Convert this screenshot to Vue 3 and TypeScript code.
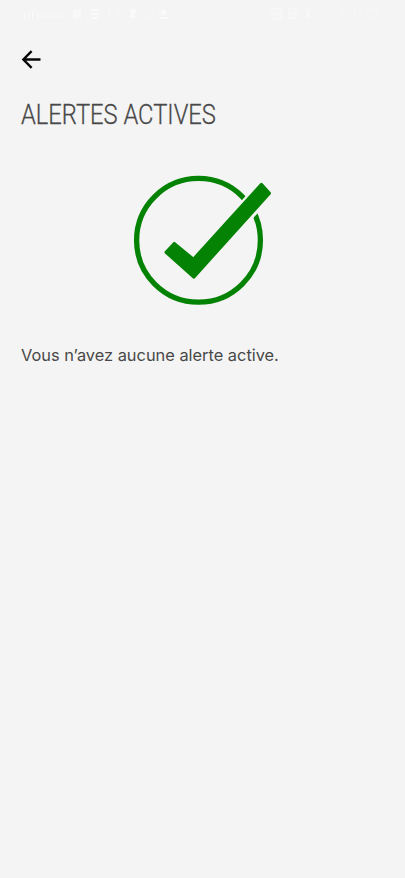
<script setup lang="ts">
const title: string = 'ALERTES ACTIVES'
const message: string = 'Vous n’avez aucune alerte active.'
</script>

<template>
  <main class="screen">
    <header class="status" aria-hidden="true">
      <svg width="405" height="28" viewBox="0 0 405 28">
        <g fill="#fafafa">
          <path d="M24 13h1v6h-1zM28 12h1v7h-1zM32 11h1v9h-1z" />
          <path d="M36 13h28v5H36z" opacity=".35" />
          <path d="M73 10h8v9h-8z" opacity=".7" />
          <path d="M91 9h7v2h-7zM90 13h9v2h-9zM91 17h7v2h-7z" />
          <path d="M130 9h6v3l-2 2 2 4h-7l2-4z" />
          <path d="M161 10h5v5h-5zM160 17h8v2h-8z" />
        </g>
        <g fill="none" stroke="#fafafa">
          <rect x="109" y="8" width="9" height="12" rx="2" opacity=".7" />
          <circle cx="149" cy="14" r="4" opacity=".5" />
          <path d="M272 9h9v10h-9zM275 11v6M278 11v6M289 9h7v9h-7zM289 13h7M305 10l6 8M311 10l-6 8M308 8v11" />
          <path d="M325 17l4-4 4 4M343 10v8M350 12h5v6M360 10v8M367 10h10v8h-10z" opacity=".6" />
        </g>
      </svg>
    </header>
    <button class="back" type="button" aria-label="Retour">
      <svg width="20" height="20" viewBox="0 0 20 20">
        <path d="M10.6 1.2 2.4 9.5l8.2 8.3M2.7 9.5h16.8" />
      </svg>
    </button>
    <h1 class="title"><span>{{ title }}</span></h1>
    <svg class="check" width="140" height="132" viewBox="132 174 140 132">
      <circle cx="198.5" cy="240.3" r="61.9" />
      <path class="gap" d="M193.6 268 267 187.8" />
      <path class="tick" d="M166 252.3 174.2 243.4 193.4 259.2 261.4 184.3 269.5 193.2 193.8 277.2Z" />
    </svg>
    <p class="message"><span>{{ message }}</span></p>
  </main>
</template>

<style>
body {
  background: #f4f4f4;
}
</style>

<style scoped>
.screen {
  display: flex;
  flex-direction: column;
  align-items: flex-start;
  min-height: 878px;
  background: #f4f4f4;
  color: #484848;
}
.status {
  height: 28px;
}
.status svg,
.back svg,
.check {
  display: block;
}
.back {
  margin: 22px 0 0 21px;
  padding: 0;
  border: 0;
  background: none;
}
.back path {
  fill: none;
  stroke: #080808;
  stroke-width: 2.4;
}
.title {
  margin: 28px 0 0 21px;
  font: 300 28.5px/34px Roboto, sans-serif;
  white-space: nowrap;
}
.title span,
.message span {
  display: inline-block;
  transform-origin: left;
}
.title span {
  transform: scaleX(0.832);
  -webkit-text-stroke: 0.3px #484848;
}
.check {
  margin: 42px 0 0 132px;
}
.check circle {
  fill: none;
  stroke: #048204;
  stroke-width: 5.3;
}
.gap {
  stroke: #f4f4f4;
  stroke-width: 20.5;
}
.tick {
  fill: #048204;
  stroke: #048204;
  stroke-width: 3;
  stroke-linejoin: round;
}
.message {
  margin: 37px 0 0 20.5px;
  font: 400 16.5px/24px Inter, sans-serif;
  white-space: nowrap;
}
.message span {
  transform: scaleX(0.992);
}
</style>
